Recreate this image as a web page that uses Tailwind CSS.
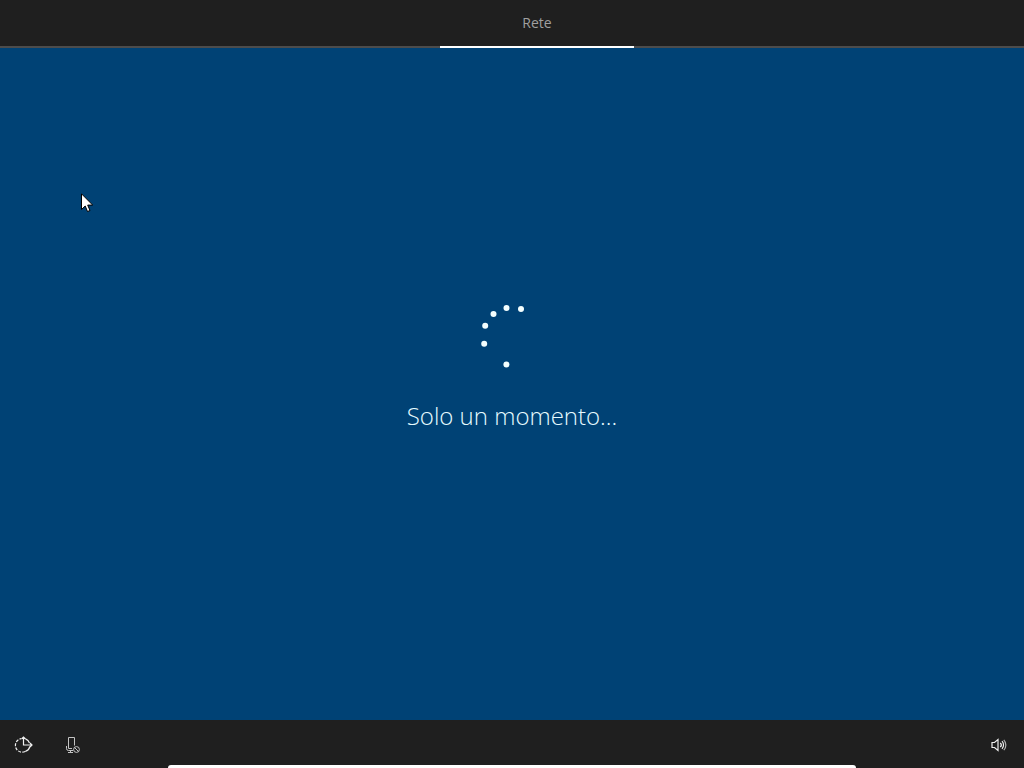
<!DOCTYPE html>
<html lang="it">

<head>
    <meta charset="UTF-8">
    <meta name="viewport" content="width=device-width, initial-scale=1.0">
    <title>Rete</title>
    <script src="https://cdn.jsdelivr.net/npm/@tailwindcss/browser@4"></script>
</head>

<body class="min-h-screen flex flex-col overflow-hidden bg-[#004275] text-white font-['Open_Sans','Noto_Sans',sans-serif]">
    <header class="h-12 bg-[#1f1f1f]">
        <nav class="h-full flex justify-center pl-[50px] border-b-2 border-[#4c4c4c]">
            <a href="#rete" aria-current="step" class="w-[194px] h-12 flex items-center justify-center border-b-2 border-white text-sm text-[#a0a0a0]">Rete</a>
        </nav>
    </header>

    <main class="flex-1 flex flex-col items-center justify-center gap-8 pb-8">
        <svg class="w-16 h-16" viewBox="480 302 64 64" fill="#f4ffff" aria-hidden="true">
            <circle cx="506.5" cy="306" r="3" />
            <circle cx="521" cy="307" r="3" />
            <circle cx="493.5" cy="312" r="3" />
            <circle cx="485.2" cy="323.8" r="3" />
            <circle cx="484.2" cy="341.8" r="3" />
            <circle cx="506.4" cy="362.5" r="3" />
        </svg>
        <h1 class="text-2xl font-light text-[#e6fbff]">Solo un momento...</h1>
    </main>

    <footer class="relative h-12 px-3 flex items-center justify-between bg-[#1f1f1f]">
        <div class="flex items-center gap-6">
            <button type="button" aria-label="Accessibilità" class="w-6 h-6">
                <svg class="w-6 h-6" viewBox="0 0 24 24" fill="none" stroke="#f0f0f0" stroke-width="1.2">
                    <path d="M17.8 14.5a6.8 6.8 0 0 1-4.6 5" />
                    <path d="M13.2 19.5A6.8 6.8 0 1 1 9 6.7" stroke-dasharray="3 1.3" />
                    <path d="M11.5 5v8H20M9.5 7l2-2 2 2M18 11l2 2-2 2" />
                    <path d="M13.5 6.9a6.8 6.8 0 0 1 4 4.1" />
                </svg>
            </button>
            <button type="button" aria-label="Microfono disattivato" class="w-6 h-6">
                <svg class="w-6 h-6" viewBox="0 0 24 24" fill="none" stroke="#c4c4c4" stroke-width="1">
                    <path d="M14.5 13.5v-8h-6v11H12" />
                    <path d="M6.5 14v2.5a2 2 0 0 0 2 2H13M10.5 18.5v2M8 20.5h5" />
                    <circle cx="16.5" cy="17.5" r="2.9" />
                    <path d="M14.5 15.5l4 4" />
                </svg>
            </button>
        </div>
        <button type="button" aria-label="Volume" class="w-7 h-6">
            <svg class="w-7 h-6" viewBox="0 0 28 24" fill="none" stroke="#f0f0f0" stroke-width="1.2">
                <path d="M8 10.5h2.5L14 7.5v11l-3.500-3H8z" />
                <path d="M16.300 10.800a3.200 3.200 0 0 1 0 4.400" />
                <path d="M18 9.200a5.500 5.500 0 0 1 0 7.600" />
                <path d="M19.800 7.800a7.600 7.600 0 0 1 0 10.400" stroke="#b0b0b0" />
            </svg>
        </button>
        <div class="absolute inset-x-[168px] bottom-0 h-[3px] rounded-t-lg bg-white"></div>
    </footer>

    <!-- mouse pointer -->
    <svg class="absolute left-[81px] top-[193px] w-3 h-5" viewBox="0 0 12 20" aria-hidden="true">
        <path d="M.5.800v15.700l3.700-3.500 2.300 5.500 2.500-1-2.300-5.400h5z" fill="#fff" stroke="#000" stroke-width="1" />
    </svg>
</body>

</html>
